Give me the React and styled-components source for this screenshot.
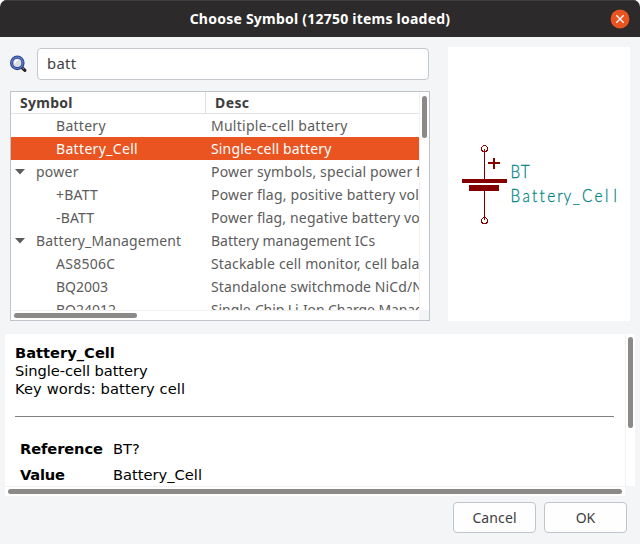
import React from "react";
import styled, { createGlobalStyle } from "styled-components";

const Global = createGlobalStyle`
  * { box-sizing: border-box; }
  body { margin: 0; background: #fff; overflow: hidden; }
`;

const Dialog = styled.div`
  width: 640px;
  height: 544px;
  display: flex;
  flex-direction: column;
  overflow: hidden;
  background: #f4f5f7;
  border-radius: 7px 7px 0 0;
  font-family: "Noto Sans", sans-serif;
  font-size: 14px;
  color: #3d3d3d;
`;

const TitleBar = styled.header`
  flex: 0 0 37px;
  display: grid;
  grid-template-columns: 30px 1fr 30px;
  align-items: center;
  padding: 0 5px;
  background: #2c2a2a;
  border-top: 1px solid #403f3e;
`;

const Title = styled.h1`
  grid-column: 2;
  margin: 0;
  text-align: center;
  font-size: 14px;
  font-weight: 700;
  line-height: 36px;
  color: #fff;
  white-space: nowrap;
`;

const Label = styled.span`
  letter-spacing: ${(p) => p.$ls || 0}px;
  white-space: nowrap;
`;

const CloseButton = styled.button`
  display: flex;
  width: 20px;
  height: 20px;
  padding: 0;
  border: 0;
  background: none;
  justify-self: center;
`;

const Upper = styled.section`
  flex: 0 0 297px;
  display: flex;
  gap: 18px;
  padding: 10px 10px 13px;
`;

const Chooser = styled.div`
  width: 420px;
  display: flex;
  flex-direction: column;
  gap: 11px;
  padding-top: 1px;
`;

const SearchRow = styled.div`
  display: flex;
  align-items: center;
  gap: 9px;
  height: 32px;
`;

const SearchField = styled.div`
  width: 392px;
  height: 32px;
  padding: 0 9px;
  border: 1px solid #c3c7cc;
  border-radius: 4px;
  background: #fff;
  font-size: 14.8px;
  line-height: 29px;
`;

const Tree = styled.div`
  display: grid;
  grid-template: 218px 10px / 408px 10px;
  height: 230px;
  border: 1px solid #bfc3ca;
  background: #fff;
`;

const TreeBody = styled.div`
  overflow: hidden;
`;

const TreeHeader = styled.div`
  display: grid;
  grid-template-columns: 195px 1fr;
  height: 22px;
  border-bottom: 1px solid #e2e3e5;
  font-weight: 700;
  line-height: 22px;
`;

const HeadCell = styled.div`
  padding-left: 9px;
  border-right: ${(p) => (p.$divided ? "1px solid #dfe0e2" : "0")};
`;

const Row = styled.div`
  display: grid;
  grid-template-columns: 25px 175px 208px;
  height: 23px;
  line-height: 23px;
  color: ${(p) => (p.$selected ? "#fff" : "#5c5c5c")};
  background: ${(p) => (p.$selected ? "#e95420" : "transparent")};
`;

const Arrow = styled.svg`
  display: block;
  margin: 9px 0 0 4px;
`;

const NameCell = styled.div`
  padding-left: ${(p) => (p.$nested ? 20 : 0)}px;
`;

const DescCell = styled.div`
  overflow: hidden;
`;

const VTrack = styled.div`
  border-left: 1px solid #f1f1f2;
  padding: ${(p) => p.$top}px 0 0 2px;
`;

const HTrack = styled.div`
  border-top: 1px solid #f1f1f2;
  background: #fff;
  padding: 2px 0 0 3px;
`;

const Thumb = styled.div`
  width: ${(p) => p.$w}px;
  height: ${(p) => p.$h}px;
  border-radius: 3px;
  background: #8b8a89;
`;

const Corner = styled.div`
  background: #f4f5f7;
`;

const Preview = styled.div`
  width: 182px;
  height: 274px;
  background: #fff;
`;

const Drawing = styled.svg`
  display: block;
  font-family: Lato, sans-serif;
  font-weight: 300;
  font-size: 18px;
`;

const Details = styled.section`
  flex: 0 0 162px;
  display: grid;
  grid-template: 152px 10px / 620px 10px;
  margin: 0 5px;
  background: #fff;
`;

const DetailsText = styled.div`
  padding: 10px 11px 0 10px;
  overflow: hidden;
  font-family: "DejaVu Sans", sans-serif;
  font-size: 14.67px;
  line-height: 18px;
  color: #000;
`;

const Line = styled.div`
  height: 18px;
  font-weight: ${(p) => (p.$bold ? 700 : 400)};
`;

const Rule = styled.hr`
  height: 1px;
  margin: 18px 0 19px;
  border: 0;
  background: #808080;
`;

const Fields = styled.div`
  display: grid;
  grid-template-columns: 93px 1fr;
  padding-left: 5px;
  line-height: 26px;
`;

const FieldName = styled.b`
  height: 26px;
`;

const FieldValue = styled.span`
  height: 26px;
`;

const Footer = styled.footer`
  display: flex;
  justify-content: flex-end;
  gap: 8px;
  padding: 6px 13px 0 0;
`;

const Button = styled.button`
  width: 83px;
  height: 31px;
  padding: 0 0 1px;
  border: 1px solid #c0c4cc;
  border-radius: 4px;
  background: #fefefe;
  font: inherit;
  color: #3d3d3d;
`;

const rows = [
  { name: "Battery", nameLs: 0.28, desc: "Multiple-cell battery", descLs: 0.26, nested: true },
  { name: "Battery_Cell", nameLs: 0.33, desc: "Single-cell battery", descLs: 0.16, nested: true, selected: true },
  { name: "power", nameLs: 0.25, desc: "Power symbols, special power flags", descLs: 0.16 },
  { name: "+BATT", nameLs: 0.2, desc: "Power flag, positive battery voltage", descLs: 0.18, nested: true },
  { name: "-BATT", nameLs: 0.15, desc: "Power flag, negative battery voltage", descLs: 0.15, nested: true },
  { name: "Battery_Management", nameLs: 0.16, desc: "Battery management ICs", descLs: 0 },
  { name: "AS8506C", nameLs: 0.25, desc: "Stackable cell monitor, cell balancer", descLs: 0.15, nested: true },
  { name: "BQ2003", nameLs: 0, desc: "Standalone switchmode NiCd/NiMH", descLs: 0.11, nested: true },
  { name: "BQ24012", nameLs: 0, desc: "Single-Chip Li-Ion Charge Management", descLs: -0.1, nested: true },
];

function Magnifier() {
  return (
    <svg width="18" height="18" viewBox="0 0 18 18">
      <path d="M12 12.6 14.9 15.4" stroke="#27272c" strokeWidth="3.2" strokeLinecap="round" />
      <path d="M12 12.2 14 14.1" stroke="#a39b88" strokeWidth="1" />
      <circle cx="7.3" cy="7.9" r="5.7" fill="#dcdce4" stroke="#2c4390" strokeWidth="3.2" />
      <circle cx="7.3" cy="7.8" r="5.7" fill="none" stroke="#6282cb" strokeWidth="1.1" />
      <path d="M5 8.4a2.6 2.8 0 0 1 2.8-3.3" fill="none" stroke="#fff" strokeWidth="1.6" />
    </svg>
  );
}

export default function App() {
  return (
    <>
      <Global />
      <Dialog>
        <TitleBar>
          <Title><Label $ls={0.23}>Choose Symbol (12750 items loaded)</Label></Title>
          <CloseButton aria-label="Close">
            <svg width="20" height="20" viewBox="0 0 20 20">
              <circle cx="10" cy="10" r="9.4" fill="#e95420" />
              <path d="M6.3 6.3 13.7 13.7M13.7 6.3 6.3 13.7" stroke="#fff" strokeWidth="1.3" />
            </svg>
          </CloseButton>
        </TitleBar>
        <Upper>
          <Chooser>
            <SearchRow>
              <Magnifier />
              <SearchField><Label $ls={0.3}>batt</Label></SearchField>
            </SearchRow>
            <Tree>
              <TreeBody>
                <TreeHeader>
                  <HeadCell $divided><Label $ls={0.28}>Symbol</Label></HeadCell>
                  <HeadCell><Label $ls={0.4}>Desc</Label></HeadCell>
                </TreeHeader>
                {rows.map((r) => (
                  <Row key={r.name} $selected={r.selected}>
                    <div>
                      {!r.nested && (
                        <Arrow width="10" height="6"><path d="M0 0H10L5 5.5Z" fill="#5c5c5c" /></Arrow>
                      )}
                    </div>
                    <NameCell $nested={r.nested}><Label $ls={r.nameLs}>{r.name}</Label></NameCell>
                    <DescCell><Label $ls={r.descLs}>{r.desc}</Label></DescCell>
                  </Row>
                ))}
              </TreeBody>
              <VTrack $top={4}><Thumb $w={5} $h={42} /></VTrack>
              <HTrack><Thumb $w={123} $h={5} /></HTrack>
              <Corner />
            </Tree>
          </Chooser>
          <Preview>
            <Drawing width="182" height="274">
              <g fill="none" stroke="#840000" strokeWidth="1" shapeRendering="crispEdges">
                <path d="M36.5 102V132M36.5 143V173" />
                <circle cx="36.5" cy="101.5" r="3" />
                <circle cx="36.5" cy="173.5" r="3" />
                <path d="M40 116H52M46 111V122" strokeWidth="2" />
              </g>
              <path d="M14 132H59V135.5H58V136H14ZM21 138H51V143.5H21Z" fill="#840000" shapeRendering="crispEdges" />
              <g fill="#008484" stroke="#008484" strokeWidth="0.3" transform="scale(0.85 1)">
                <text x="73.6 85.6" y="131">BT</text>
                <text x="73.6 87.8 98.8 107.6 116.8 128.4 135.8 146.8 157.8 172.5 184.8 194.6" y="155">Battery_Cell</text>
              </g>
            </Drawing>
          </Preview>
        </Upper>
        <Details>
          <DetailsText>
            <Line $bold>Battery_Cell</Line>
            <Line><Label $ls={-0.06}>Single-cell battery</Label></Line>
            <Line><Label $ls={0.1}>Key words: battery cell</Label></Line>
            <Rule />
            <Fields>
              <FieldName><Label $ls={-0.1}>Reference</Label></FieldName>
              <FieldValue>BT?</FieldValue>
              <FieldName><Label $ls={-0.25}>Value</Label></FieldName>
              <FieldValue>Battery_Cell</FieldValue>
            </Fields>
          </DetailsText>
          <VTrack $top={3}><Thumb $w={5} $h={91} /></VTrack>
          <HTrack><Thumb $w={614} $h={5} /></HTrack>
          <Corner />
        </Details>
        <Footer>
          <Button><Label $ls={0.1}>Cancel</Label></Button>
          <Button><Label>OK</Label></Button>
        </Footer>
      </Dialog>
    </>
  );
}
